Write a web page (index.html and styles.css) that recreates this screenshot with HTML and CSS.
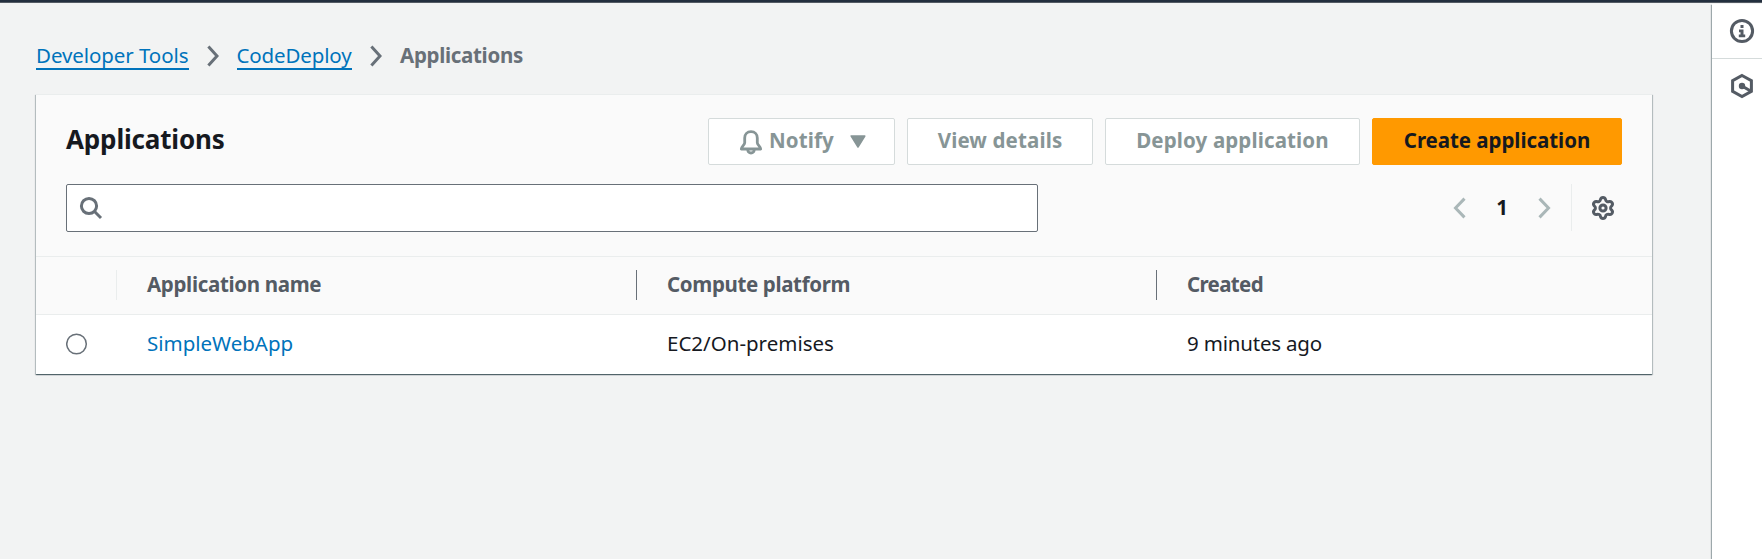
FILE: index.html
```html
<!DOCTYPE html>
<html lang="en">
<head>
<meta charset="utf-8">
<title>Applications</title>
<link rel="stylesheet" href="styles.css">
</head>
<body>
<div class="topbar"></div>
<div class="layout">
  <main class="main">
    <nav class="breadcrumb">
      <a class="crumb tools" href="#">Developer Tools</a>
      <svg class="sep" width="12" height="22" viewBox="0 0 12 22"><path d="M1.4 1.6 L10 11 L1.4 20.4"/></svg>
      <a class="crumb deploy" href="#">CodeDeploy</a>
      <svg class="sep" width="12" height="22" viewBox="0 0 12 22"><path d="M1.4 1.6 L10 11 L1.4 20.4"/></svg>
      <span class="current">Applications</span>
    </nav>
    <section class="card">
      <header class="card-head">
        <div class="title-row">
          <h1 class="title">Applications</h1>
          <div class="actions">
            <button class="btn notify" disabled>
              <svg class="bell" width="24" height="25" viewBox="0 0 24 25"><path d="M12 1.7C8.2 1.7 5.7 4.3 5.7 8v4.8c0 2-3.4 3.7-3.4 6.2h19.4c0-2.5-3.4-4.2-3.4-6.2V8c0-3.7-2.5-6.3-6.3-6.3z"/><path d="M8.7 19.5c.2 2.3 1.5 3.5 3.3 3.5s3.1-1.2 3.3-3.5"/></svg>
              <span>Notify</span>
              <svg class="caret" width="16" height="13" viewBox="0 0 16 13"><path d="M1.2 1h13.6L8 12z"/></svg>
            </button>
            <button class="btn view" disabled><span>View details</span></button>
            <button class="btn deploy-app" disabled><span>Deploy application</span></button>
            <button class="btn primary"><span>Create application</span></button>
          </div>
        </div>
        <div class="tools-row">
          <div class="search">
            <svg width="24" height="24" viewBox="0 0 24 24"><circle cx="10" cy="10" r="7.6"/><path d="M15.3 15.3 L22 22"/></svg>
          </div>
          <div class="pager">
            <svg class="arrow" width="13" height="22" viewBox="0 0 13 22"><path d="M11.5 1.6 L2.5 11 L11.5 20.4"/></svg>
            <span class="page">1</span>
            <svg class="arrow" width="13" height="22" viewBox="0 0 13 22"><path d="M1.5 1.6 L10.5 11 L1.5 20.4"/></svg>
            <span class="rule"></span>
            <svg class="gear" width="26" height="26" viewBox="-13 -13 26 26"><path d="M-2.5 -8.6 A2.6 2.6 0 0 1 2.5 -8.6 A2.6 2.6 0 0 0 6.2 -6.47 A2.6 2.6 0 0 1 8.7 -2.13 A2.6 2.6 0 0 0 8.7 2.13 A2.6 2.6 0 0 1 6.2 6.47 A2.6 2.6 0 0 0 2.5 8.6 A2.6 2.6 0 0 1 -2.5 8.6 A2.6 2.6 0 0 0 -6.2 6.47 A2.6 2.6 0 0 1 -8.7 2.13 A2.6 2.6 0 0 0 -8.7 -2.13 A2.6 2.6 0 0 1 -6.2 -6.47 A2.6 2.6 0 0 0 -2.5 -8.6 Z"/><circle r="3.1"/></svg>
          </div>
        </div>
      </header>
      <div class="row head">
        <div class="cell pick"></div>
        <div class="cell c-name">Application name</div>
        <div class="cell c-platform">Compute platform</div>
        <div class="cell c-created">Created</div>
      </div>
      <div class="row body">
        <div class="cell pick"><svg class="radio" width="22" height="22" viewBox="0 0 22 22"><circle cx="10.5" cy="11" r="9.8"/></svg></div>
        <div class="cell"><a class="link" href="#">SimpleWebApp</a></div>
        <div class="cell">EC2/On-premises</div>
        <div class="cell ago">9 minutes ago</div>
      </div>
    </section>
  </main>
  <aside class="side">
    <div class="side-item info">
      <svg width="26" height="26" viewBox="-13 -13 26 26"><circle class="line" r="10.6"/><path class="fill" d="M-1.5 -6h3v3h-3zM-3 -1.5h4.5v5h1.7v2.7h-6.4v-2.7h1.7v-2.3h-1.5z"/></svg>
    </div>
    <div class="side-item">
      <svg width="26" height="26" viewBox="-13 -13 26 26"><path class="line" d="M0 -10.5 L9.4 -5.3 V5.3 L0 10.5 L-9.4 5.3 V-5.3 Z"/><circle class="fill" r="3.2"/><path class="line" d="M0 0 L9 5.2"/></svg>
    </div>
  </aside>
</div>
</body>
</html>
```

FILE: styles.css
```css
* { box-sizing: border-box; }
body {
  margin: 0;
  height: 559px;
  overflow: hidden;
  display: flex;
  flex-direction: column;
  background: #f2f3f3;
  color: #16191f;
  font: 20.5px/22px "Noto Sans", sans-serif;
}
svg { display: block; flex: none; fill: none; }
.topbar { height: 3px; background: #232f3e; border-bottom: 1px solid #545b64; flex: none; }
.layout { flex: 1; display: flex; }
.main { flex: 1; padding: 41px 60px 0 36px; }

.breadcrumb { display: flex; align-items: flex-start; height: 50px; white-space: nowrap; }
.crumb { color: #0073bb; text-decoration: none; padding-bottom: 2px; border-bottom: 2px solid #0073bb; }
.tools { width: 152.5px; letter-spacing: -0.08px; }
.deploy { width: 115.5px; letter-spacing: -0.14px; }
.current { color: #687078; font-weight: 700; letter-spacing: -0.31px; }
.sep { margin: 1px 18px 0 18px; stroke: #687078; stroke-width: 3; }

.card {
  width: 1616px;
  background: #fff;
  box-shadow: 0 1px 1px 0 rgba(0, 28, 36, .5), 1px 1px 1px 0 rgba(0, 28, 36, .18), -1px 1px 1px 0 rgba(0, 28, 36, .18);
  border-top: 1px solid #eaeded;
}
.card-head { height: 161px; padding: 23px 30px 0; background: #fafafa; }
.title-row { display: flex; justify-content: space-between; height: 47px; }
.title { margin: 6px 0 0; font-size: 26px; line-height: 30px; font-weight: 700; letter-spacing: -0.16px; }
.actions { display: flex; gap: 12px; }
.btn {
  height: 47px;
  padding: 0 0 3px;
  display: flex;
  align-items: center;
  justify-content: center;
  font: 700 20.5px/22px "Noto Sans", sans-serif;
  border: 1px solid #d5dbdb;
  border-radius: 2px;
  background: #fff;
  color: #879596;
  letter-spacing: .13px;
  white-space: nowrap;
}
.notify { width: 187px; padding-left: 2px; }
.view { width: 186px; }
.deploy-app { width: 255px; }
.primary { width: 250px; background: #f90; border-color: #f90; color: #16191f; letter-spacing: -0.05px; }
.bell { margin: 4px 6px 0 0; stroke: #879596; stroke-width: 2.8; stroke-linejoin: round; }
.caret { margin: 3px 0 0 16px; fill: #879596; stroke: #879596; stroke-width: 1.5; stroke-linejoin: round; }

.tools-row { display: flex; justify-content: space-between; margin-top: 19px; }
.search {
  width: 972px;
  height: 48px;
  padding: 11px 0 0 12px;
  background: #fff;
  border: 1px solid #687078;
  border-radius: 2px;
}
.search svg { stroke: #687078; stroke-width: 3; }
.pager { display: flex; align-items: center; height: 47px; padding-right: 6px; }
.arrow { stroke: #aab7b8; stroke-width: 3; }
.page { width: 72px; text-align: center; font-weight: 700; padding-bottom: 1px; }
.rule { width: 1px; height: 47px; background: #eaeded; margin: 0 18px 0 20px; }
.gear { stroke: #545b64; stroke-width: 3; }

.row { display: grid; grid-template-columns: 81px 520px 520px 1fr; }
.head { height: 59px; padding-top: 13px; background: #fafafa; border-top: 1px solid #eaeded; border-bottom: 1px solid #eaeded; color: #545b64; font-weight: 700; }
.body { height: 59px; align-items: center; padding-bottom: 4px; }
.cell { padding-left: 30px; white-space: nowrap; }
.head .cell { height: 30px; line-height: 28px; border-right: 1px solid #687078; }
.head .pick { border-color: #eaeded; }
.head .c-created { border: 0; letter-spacing: -0.65px; }
.head .c-name { letter-spacing: -0.33px; }
.head .c-platform { letter-spacing: -0.36px; }
.ago { letter-spacing: -0.19px; }
.link { color: #0073bb; text-decoration: none; letter-spacing: -0.02px; }
.radio { margin-top: 3px; stroke: #687078; stroke-width: 1.5; }

.side { width: 50px; background: #fff; box-shadow: -1px 1px 1px 0 rgba(0, 28, 36, .35); margin-top: 1px; }
.side-item { padding: 14px 0 0 17px; }
.info { height: 55px; border-bottom: 1px solid #d5dbdb; }
.line { stroke: #545b64; stroke-width: 3; }
.fill { fill: #545b64; }
```
